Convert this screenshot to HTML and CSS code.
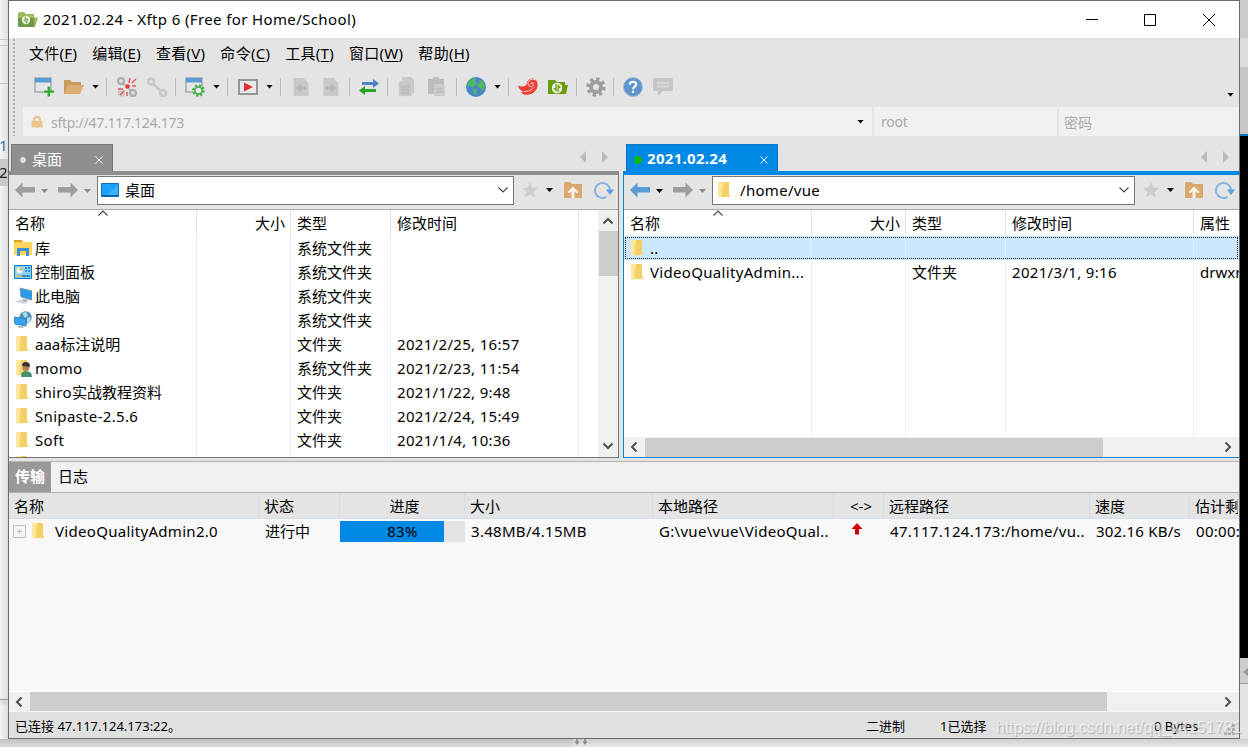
FILE: index.html
```
<!DOCTYPE html>
<html lang="zh-CN">
<head>
    <meta charset="UTF-8">
    <meta name="viewport" content="width=device-width, initial-scale=1.0">
    <title>2021.02.24 - Xftp 6 (Free for Home/School)</title>
    <link rel="stylesheet" href="styles.css">
</head>
<body>
    <!-- Shared icons -->
    <svg class="sprite" aria-hidden="true">
        <symbol id="folder" viewBox="0 0 18 18">
            <path d="M6 1h7v15H6z" fill="#f3cf66"/>
            <path d="M12 13h2v3h-3z" fill="#f6d677"/>
            <path d="M2 1h5l-1 14-1 2-3-1z" fill="#ffe9a2"/>
            <path d="M5 4v13l1.500-1.500V4z" fill="#f8dc85"/>
        </symbol>
        <symbol id="back" viewBox="0 0 20 16">
            <path d="M0 8l7.500-7.500V5H20v5.500H7.500V15.500z"/>
        </symbol>
        <symbol id="star" viewBox="0 0 18 18">
            <path d="M9 1l2.300 5.400 5.700.5-4.300 3.800 1.300 5.800L9 13.400 4 16.500l1.300-5.800L1 6.900l5.700-.5z" fill="#cdcdcd"/>
        </symbol>
        <symbol id="up" viewBox="0 0 18 16">
            <path d="M0 2q0-2 2-2h4l2 2h10v14H0z" fill="#d9a66c"/>
            <path d="M0 4h18v12H0z" fill="#dba86e"/>
            <path d="M9 4.500l5.500 5.500-1.500 1.500-2.500-2V16h-3V9.500L5 11.500 3.500 10z" fill="#fbf3e9"/>
        </symbol>
        <symbol id="refresh" viewBox="0 0 20 18">
            <path d="M12.500 15.800A7.500 7.500 0 1 1 16 9" fill="none" stroke="#86b4e0" stroke-width="2"/>
            <path d="M12 8.500h8L16 14z" fill="#5e9fdc"/>
        </symbol>
        <symbol id="chev" viewBox="0 0 12 12">
            <path d="M1.500 3.500L6 8l4.500-4.500" fill="none" stroke="#444" stroke-width="1.100"/>
        </symbol>
        <symbol id="thick" viewBox="0 0 12 12">
            <path d="M8.500 1.500L4 6l4.500 4.500" fill="none" stroke="#505050" stroke-width="2"/>
        </symbol>
    </svg>

    <div class="side side-left">
        <div class="ln l1"></div>
        <div class="ln l2"></div>
        <div class="ln l3"></div>
        <div class="num blue">1</div>
        <div class="num sel">2</div>
        <div class="ln l4"></div>
    </div>

    <div class="window">
        <!-- Title bar -->
        <div class="titlebar">
            <svg width="20" height="16" viewBox="0 0 20 16">
                <path d="M0 2q0-2 2-2h4l2 2h8v3l4 1-3 9H0z" fill="#9dbb5c"/>
                <path d="M0 6h16v9H0z" fill="#6f9a45"/>
                <circle cx="8" cy="8" r="4.200" fill="#eef4e2"/>
                <path d="M7.200 4.500v5L5.700 8M8.800 11.500v-5l1.500 1.500" fill="none" stroke="#6f9a45"/>
            </svg>
            <span class="title">2021.02.24 - Xftp 6 (Free for Home/School)</span>
            <svg class="winbtns" width="140" height="16" viewBox="0 0 140 16">
                <path d="M0 7.500h12M58.500 2.500h11v11h-11zM117 2l12 12M129 2l-12 12" fill="none" stroke="#000"/>
            </svg>
        </div>

        <div class="bars">
            <div class="grip"></div>
            <div class="bars-main">
                <!-- Menu -->
                <div class="menu">
                    <span>文件(<u>F</u>)</span>
                    <span>编辑(<u>E</u>)</span>
                    <span>查看(<u>V</u>)</span>
                    <span>命令(<u>C</u>)</span>
                    <span>工具(<u>T</u>)</span>
                    <span>窗口(<u>W</u>)</span>
                    <span>帮助(<u>H</u>)</span>
                </div>

                <!-- Toolbar -->
                <div class="toolbar">
                    <svg class="tool" viewBox="0 0 20 20">
                        <path d="M1 1h16v14H1z" fill="#e4e6e7" stroke="#a3a8ab" stroke-width="1.500"/>
                        <path d="M1 1h16v4.500H1z" fill="#5b9bd5"/>
                        <path d="M14.800 9.500v10M10 14.600h10" stroke="#31ae31" stroke-width="2.400"/>
                    </svg>
                    <svg class="tool" viewBox="0 0 20 20">
                        <path d="M0 17V3h6l2 2h9v4" fill="#c99a60"/>
                        <path d="M0 17L4 8h16l-4 9z" fill="#dcae75"/>
                    </svg>
                    <i class="caret"></i>
                    <i class="sep wide"></i>
                    <svg class="tool" viewBox="0 0 20 20">
                        <g fill="none" stroke="#afafaf" stroke-width="2.400">
                            <circle cx="4" cy="4" r="3"/><circle cx="16" cy="16" r="3"/>
                            <circle cx="4.500" cy="16" r="2.500" stroke="#cacaca"/><path d="M6 6l2 2M12 12l2 2"/>
                        </g>
                        <path d="M12 6l1-5M15 6l4-4M15 9h4M6 12H1M7 14l-4 4M10 15v4" stroke="#e5555a" stroke-width="1.500"/>
                        <circle cx="10.500" cy="9.500" r="2.300" fill="#e0383e"/>
                    </svg>
                    <svg class="tool" viewBox="0 0 20 20">
                        <g fill="none" stroke="#c8c8c8" stroke-width="2.600">
                            <circle cx="4" cy="4.500" r="3"/><circle cx="16" cy="16" r="3"/><path d="M6 7l8 7"/>
                        </g>
                    </svg>
                    <i class="sep"></i>
                    <svg class="tool" viewBox="0 0 20 20">
                        <path d="M1 1h16v14H1z" fill="#e4e6e7" stroke="#a3a8ab" stroke-width="1.500"/>
                        <path d="M1 1h16v4.500H1z" fill="#5b9bd5"/>
                        <circle cx="13.500" cy="13.500" r="5" fill="#e4e6e7" stroke="#43ae43" stroke-width="2.600" stroke-dasharray="2 1.900"/>
                        <circle cx="13.500" cy="13.500" r="3.600" fill="#eee" stroke="#43ae43" stroke-width="1.600"/>
                    </svg>
                    <i class="caret"></i>
                    <i class="sep wide"></i>
                    <svg class="tool" viewBox="0 0 20 20">
                        <rect x="1" y="3" width="18" height="14" fill="#e6e8ea" stroke="#92979b" stroke-width="2"/>
                        <path d="M6 5.500l9 4.500-9 4.500z" fill="#e32f33"/>
                    </svg>
                    <i class="caret"></i>
                    <i class="sep wide"></i>
                    <svg class="tool" viewBox="0 0 20 20">
                        <path d="M2.500 1h10l5 5v13h-15z" fill="#c9c9c9"/>
                        <path d="M5 11l5-4.500v3h5v3h-5v3z" fill="#b7b7b7"/>
                    </svg>
                    <svg class="tool" viewBox="0 0 20 20">
                        <path d="M2.500 1h10l5 5v13h-15z" fill="#c9c9c9"/>
                        <path d="M15 11l-5-4.500v3H5v3h5v3z" fill="#b7b7b7"/>
                    </svg>
                    <i class="sep"></i>
                    <svg class="tool" viewBox="0 0 20 20">
                        <path d="M3 5h11V2l6 4.500-6 4.500V8H3z" fill="#4a86c8"/>
                        <path d="M17 12H6V9L0 13.500 6 18v-3h11z" fill="#27a527"/>
                    </svg>
                    <i class="sep"></i>
                    <svg class="tool" viewBox="0 0 20 20">
                        <path d="M5 0h9l3 3v13H5z" fill="#c9c9c9"/>
                        <path d="M2 4h10l3 3v12H2z" fill="#c6c6c6" stroke="#d3d3d3" stroke-width=".6"/>
                        <path d="M4 10h8M4 13h8M4 16h8" stroke="#b5b5b5"/>
                    </svg>
                    <svg class="tool" viewBox="0 0 20 20">
                        <path d="M1 2h4l2-2h4l2 2h4v15H1z" fill="#bdbdbd"/>
                        <path d="M7 7h8l3 3v9H7z" fill="#cbcbcb"/>
                        <path d="M9 12h6M9 15h7" stroke="#b8b8b8"/>
                    </svg>
                    <i class="sep gap"></i>
                    <svg class="tool" viewBox="0 0 20 20">
                        <circle cx="10" cy="10" r="10" fill="#4a86c8"/>
                        <path d="M1 6l4-4 5-1-1 4 2 2-4 3-5-1zM7 11l4 2-1 5-2-1z" fill="#4db95f"/>
                        <path d="M13 3l4 1 2 6-3 4-2-3-2-1-1-3 3-1z" fill="#4db95f"/>
                    </svg>
                    <i class="caret"></i>
                    <i class="sep wide near"></i>
                    <svg class="tool" viewBox="0 0 20 20">
                        <path d="M0 8.500q5 2 8.500-.5c0-4.500 3.500-7 7-6.500 5 1.500 5 8 2.500 11.500-4 6-12 6-15 2.500l2.500-.8Q1 13 0 8.500z" fill="#ee4136"/>
                        <path d="M18.500 3.500c-3-2.500-9-1-8.500 3.500.5 3.500 5.500 3 5.500.3 0-1.800-2.500-2-2.800-.3M6 14.500c4 0 8-1 10-4.500" fill="none" stroke="#f8d6d2"/>
                    </svg>
                    <svg class="tool" viewBox="0 0 20 20">
                        <path d="M0 17V3h7l2 2h8v3h3l-2 9z" fill="#6a9b0c"/>
                        <circle cx="9" cy="11" r="5.200" fill="#fff"/>
                        <path d="M8 7v6.500L5.800 11M10.200 15V8.500l2.200 2.500" fill="none" stroke="#6a9b0c" stroke-width="1.400"/>
                    </svg>
                    <i class="sep"></i>
                    <svg class="tool" viewBox="0 0 20 20">
                        <circle cx="10" cy="10" r="8" fill="none" stroke="#979b9e" stroke-width="3.400" stroke-dasharray="3.200 3.080"/>
                        <circle cx="10" cy="10" r="5" fill="none" stroke="#9b9ea1" stroke-width="4"/>
                    </svg>
                    <i class="sep tight"></i>
                    <svg class="tool" viewBox="0 0 20 20">
                        <circle cx="10" cy="10" r="9.500" fill="#5f94cd" stroke="#a3bddb"/>
                        <path d="M6.800 7.800c0-4.200 6.600-4 6.400-.3 0 2-3.200 2.300-3.200 4.700M10 13.500v2.500" fill="none" stroke="#fff" stroke-width="2.100"/>
                    </svg>
                    <svg class="tool" viewBox="0 0 20 20">
                        <path d="M2 1h16q2 0 2 2v9q0 2-2 2h-8l-5 5v-5H2q-2 0-2-2V3q0-2 2-2z" fill="#c6c6c6"/>
                        <path d="M4 6h12M4 9.500h12" stroke="#d6d6d6" stroke-width="2"/>
                    </svg>
                    <i class="caret last"></i>
                </div>

                <!-- Address bar -->
                <div class="address">
                    <div class="field host">
                        <svg width="12" height="12" viewBox="0 0 12 12">
                            <path d="M3 6V3.500q0-2.500 3-2.500t3 2.500V6" fill="none" stroke="#e6bd84" stroke-width="1.800"/>
                            <path d="M.5 5h11v6.500H.5z" fill="#ecc48c"/>
                        </svg>
                        <span>sftp://47.117.124.173</span>
                        <i class="caret"></i>
                    </div>
                    <div class="field user">root</div>
                    <div class="field pass">密码</div>
                </div>
            </div>
        </div>

        <!-- File panes -->
        <div class="panes">
            <div class="pane local">
                <div class="tabs">
                    <div class="tab"><i class="dot"></i><span>桌面</span><svg width="8" height="8" viewBox="0 0 8 8"><path d="M.5.5l7 7M7.500.5l-7 7" stroke="#fff"/></svg></div>
                    <svg class="tabnav" width="28" height="12" viewBox="0 0 28 12"><path d="M6 0v12L0 6zM22 0v12l6-6z" fill="#bababa"/></svg>
                </div>
                <div class="pane-box">
                    <div class="navbar">
                        <svg class="arrow" width="20" height="16"><use href="#back"/></svg>
                        <i class="caret grey"></i>
                        <svg class="arrow flip" width="20" height="16"><use href="#back"/></svg>
                        <i class="caret grey"></i>
                        <div class="combo">
                            <svg width="18" height="14" viewBox="0 0 18 14">
                                <path d="M.5.5h17v13H.5z" fill="#1aa1fb" stroke="#0b6cb8"/>
                                <path d="M5 13L17 2v11z" fill="#3db0ff"/><path d="M1 12.500h16" stroke="#0b5e9f"/>
                            </svg>
                            <span>桌面</span>
                            <svg class="end" width="12" height="12"><use href="#chev"/></svg>
                        </div>
                        <svg class="fav" width="18" height="18"><use href="#star"/></svg>
                        <i class="caret"></i>
                        <svg class="up" width="18" height="16"><use href="#up"/></svg>
                        <svg width="20" height="18"><use href="#refresh"/></svg>
                    </div>
                    <div class="list-wrap">
                        <div class="list">
                            <div class="row head">
                                <div class="c-name">名称<svg class="sort" width="12" height="12"><use href="#chev"/></svg></div><div class="c-size">大小</div><div class="c-type">类型</div><div class="c-date">修改时间</div><div class="c-attr"></div>
                            </div>
                            <div class="row">
                                <div class="c-name"><svg width="18" height="18" viewBox="0 0 18 18"><path d="M0 1h8l1 2H0z" fill="#dfa21a"/><path d="M0 3h18v13H0z" fill="#ffd35c"/><path d="M3 17V9h12v8h-3v-5H6v5z" fill="#3c8fd9"/></svg>库</div><div class="c-size"></div><div class="c-type">系统文件夹</div><div class="c-date"></div><div class="c-attr"></div>
                            </div>
                            <div class="row">
                                <div class="c-name"><svg width="18" height="18" viewBox="0 0 18 18"><path d="M.5 2.500h17v13H.5z" fill="#8ad4fa" stroke="#1478b8"/><circle cx="5.500" cy="7.500" r="3" fill="#fff"/><path d="M5.500 7.500V4.500a3 3 0 0 1 3 3z" fill="#f7a823"/><path d="M11 5h2M14 5h2M11 8h2M14 8h2M8 13h8" stroke="#1a78b9" stroke-width="1.500"/><path d="M3 13h5" stroke="#f7a823" stroke-width="1.500"/></svg>控制面板</div><div class="c-size"></div><div class="c-type">系统文件夹</div><div class="c-date"></div><div class="c-attr"></div>
                            </div>
                            <div class="row">
                                <div class="c-name"><svg width="18" height="18" viewBox="0 0 18 18"><path d="M6 1l12 3v9L7 10z" fill="#2b9ceb" stroke="#6b8aa0" stroke-width=".8"/><path d="M9 12l5 1-2 2-4-1z" fill="#9aa7b0"/><path d="M0 14l8-1 6 2-4 2z" fill="#c9cfd4"/></svg>此电脑</div><div class="c-size"></div><div class="c-type">系统文件夹</div><div class="c-date"></div><div class="c-attr"></div>
                            </div>
                            <div class="row">
                                <div class="c-name"><svg width="18" height="18" viewBox="0 0 18 18"><circle cx="11.500" cy="6.500" r="6.300" fill="#4f93bd"/><path d="M8 2l4-1 2 3-3 3zM13 7l4-1-1 5-3 1z" fill="#b5dbe8"/><path d="M0 6l12 2v7L1 13z" fill="#36a5f2" stroke="#1b75bb" stroke-width=".8"/><path d="M4 15h5l1 2H4z" fill="#b8c4cc"/></svg>网络</div><div class="c-size"></div><div class="c-type">系统文件夹</div><div class="c-date"></div><div class="c-attr"></div>
                            </div>
                            <div class="row">
                                <div class="c-name"><svg width="18" height="18"><use href="#folder"/></svg>aaa标注说明</div><div class="c-size"></div><div class="c-type">文件夹</div><div class="c-date"><b>2021/2/25, 16:57</b></div><div class="c-attr"></div>
                            </div>
                            <div class="row">
                                <div class="c-name"><svg width="18" height="18" viewBox="0 0 18 18"><use href="#folder"/><path d="M7 18q0-6 5-6 6 0 6 6z" fill="#43906f"/><circle cx="12" cy="8.500" r="3.500" fill="#b98058"/><path d="M8 7q0-4 4-4t4 4l-1 1-6-1z" fill="#3a3533"/></svg><b>momo</b></div><div class="c-size"></div><div class="c-type">系统文件夹</div><div class="c-date"><b>2021/2/23, 11:54</b></div><div class="c-attr"></div>
                            </div>
                            <div class="row">
                                <div class="c-name"><svg width="18" height="18"><use href="#folder"/></svg><span><b>shiro</b>实战教程资料</span></div><div class="c-size"></div><div class="c-type">文件夹</div><div class="c-date"><b>2021/1/22, 9:48</b></div><div class="c-attr"></div>
                            </div>
                            <div class="row">
                                <div class="c-name"><svg width="18" height="18"><use href="#folder"/></svg><b>Snipaste-2.5.6</b></div><div class="c-size"></div><div class="c-type">文件夹</div><div class="c-date"><b>2021/2/24, 15:49</b></div><div class="c-attr"></div>
                            </div>
                            <div class="row">
                                <div class="c-name"><svg width="18" height="18"><use href="#folder"/></svg><b>Soft</b></div><div class="c-size"></div><div class="c-type">文件夹</div><div class="c-date"><b>2021/1/4, 10:36</b></div><div class="c-attr"></div>
                            </div>
                            <div class="row fill">
                                <div class="c-name"><svg width="18" height="18"><use href="#folder"/></svg></div><div class="c-size"></div><div class="c-type"></div><div class="c-date"></div><div class="c-attr"></div>
                            </div>
                        </div>
                        <div class="vscroll">
                            <svg class="rot" width="12" height="12"><use href="#thick"/></svg>
                            <div class="thumb"></div>
                            <svg class="rot down" width="12" height="12"><use href="#thick"/></svg>
                        </div>
                    </div>
                </div>
            </div>

            <div class="pane remote">
                <div class="tabs">
                    <div class="tab"><i class="dot"></i><span>2021.02.24</span><svg width="8" height="8" viewBox="0 0 8 8"><path d="M.5.5l7 7M7.500.5l-7 7" stroke="#fff"/></svg></div>
                    <svg class="tabnav" width="28" height="12" viewBox="0 0 28 12"><path d="M6 0v12L0 6zM22 0v12l6-6z" fill="#bababa"/></svg>
                </div>
                <div class="pane-box">
                    <div class="navbar">
                        <svg class="arrow on" width="20" height="16"><use href="#back"/></svg>
                        <i class="caret"></i>
                        <svg class="arrow flip" width="20" height="16"><use href="#back"/></svg>
                        <i class="caret grey"></i>
                        <div class="combo">
                            <svg width="18" height="18"><use href="#folder"/></svg>
                            <span class="path">/home/vue</span>
                            <svg class="end" width="12" height="12"><use href="#chev"/></svg>
                        </div>
                        <svg class="fav" width="18" height="18"><use href="#star"/></svg>
                        <i class="caret"></i>
                        <svg class="up" width="18" height="16"><use href="#up"/></svg>
                        <svg width="20" height="18"><use href="#refresh"/></svg>
                    </div>
                    <div class="list-wrap">
                        <div class="list">
                            <div class="row head">
                                <div class="c-name">名称<svg class="sort" width="12" height="12"><use href="#chev"/></svg></div><div class="c-size">大小</div><div class="c-type">类型</div><div class="c-date">修改时间</div><div class="c-attr">属性</div>
                            </div>
                            <div class="row selected">
                                <div class="c-name"><svg width="18" height="18"><use href="#folder"/></svg><b>..</b></div><div class="c-size"></div><div class="c-type"></div><div class="c-date"></div><div class="c-attr"></div>
                            </div>
                            <div class="row">
                                <div class="c-name"><svg width="18" height="18"><use href="#folder"/></svg><b>VideoQualityAdmin...</b></div><div class="c-size"></div><div class="c-type">文件夹</div><div class="c-date"><b>2021/3/1, 9:16</b></div><div class="c-attr">drwxr</div>
                            </div>
                            <div class="row fill">
                                <div class="c-name"></div><div class="c-size"></div><div class="c-type"></div><div class="c-date"></div><div class="c-attr"></div>
                            </div>
                        </div>
                    </div>
                    <div class="hscroll">
                        <svg width="12" height="12"><use href="#thick"/></svg>
                        <div class="thumb"></div>
                        <svg class="flip" width="12" height="12"><use href="#thick"/></svg>
                    </div>
                </div>
            </div>
        </div>

        <!-- Transfers -->
        <div class="bottom-tabs">
            <div class="btab active">传输</div>
            <div class="btab">日志</div>
        </div>
        <div class="transfer head">
            <div class="t-name">名称</div><div class="t-state">状态</div><div class="t-prog">进度</div><div class="t-size">大小</div><div class="t-local">本地路径</div><div class="t-dir">&lt;-&gt;</div><div class="t-remote">远程路径</div><div class="t-speed">速度</div><div class="t-eta">估计剩余时间</div>
        </div>
        <div class="transfer item">
            <div class="t-name">
                <svg width="13" height="13" viewBox="0 0 13 13"><path d="M.5.5h12v12H.5zM4 6.500h5M6.500 4v5" fill="none" stroke="#bdbdbd"/></svg>
                <svg class="tfolder" width="18" height="18"><use href="#folder"/></svg>
                <span>VideoQualityAdmin2.0</span>
            </div>
            <div class="t-state">进行中</div>
            <div class="t-prog"><div class="progress"><div class="bar" style="width: 83%"></div><span>83%</span></div></div>
            <div class="t-size">3.48MB/4.15MB</div>
            <div class="t-local">G:\vue\vue\VideoQual..</div>
            <div class="t-dir"><svg width="12" height="12" viewBox="0 0 12 12"><path d="M6 0l5.500 6H8v5.500H4V6H.5z" fill="#d00000"/></svg></div>
            <div class="t-remote">47.117.124.173:/home/vu..</div>
            <div class="t-speed">302.16 KB/s</div>
            <div class="t-eta">00:00:02</div>
        </div>
        <div class="empty"></div>
        <div class="hscroll wide">
            <svg width="12" height="12"><use href="#thick"/></svg>
            <div class="thumb"></div>
            <svg class="flip" width="12" height="12"><use href="#thick"/></svg>
        </div>

        <!-- Status bar -->
        <div class="status">
            <span class="s-conn">已连接 47.117.124.173:22。</span>
            <span class="s-mode">二进制</span>
            <span class="s-sel">1已选择</span>
            <span class="s-bytes">0 Bytes</span>
            <svg class="size-grip" width="12" height="12" viewBox="0 0 12 12"><path d="M8 0h3v3H8zM4 4h3v3H4zM8 4h3v3H8zM0 8h3v3H0zM4 8h3v3H4zM8 8h3v3H8z" fill="#b4b4b4"/></svg>
        </div>
    </div>

    <div class="side side-right">
        <div class="r1"></div>
        <div class="r2"></div>
        <div class="r3"></div>
        <div class="r4"></div>
        <div class="r5"></div>
        <div class="r6"><svg width="6" height="10" viewBox="0 0 6 10"><path d="M0 5l6-5v10z" fill="#9a9a9a"/></svg></div>
    </div>

    <div class="below">
        <div class="below-left"></div>
        <svg width="20" height="7" viewBox="0 0 20 7"><path d="M4 0v5M12 0v5" stroke="#8a8a8a" stroke-width="1.500"/><path d="M1.500 2.500h5L4 6zM9.500 2.500h5L12 6z" fill="#8a8a8a"/></svg>
    </div>

    <div class="watermark">https://blog.csdn.net/qq_44151781</div>
</body>
</html>
```
FILE: styles.css
```
* {
    margin: 0;
    padding: 0;
    box-sizing: border-box;
}

body {
    width: 1248px;
    height: 747px;
    overflow: hidden;
    display: grid;
    grid-template-columns: 8px 1232px 8px;
    grid-template-rows: 739px 8px;
    background: #e8e8e8;
    color: #000;
    font-family: "Noto Sans", "Noto Sans CJK SC", sans-serif;
    font-size: 15px;
    line-height: 24px;
    white-space: nowrap;
}

svg {
    display: block;
    flex: none;
}

.sprite {
    position: absolute;
    width: 0;
    height: 0;
}

.flip {
    transform: scaleX(-1);
}

/* What shows behind the window */
.side {
    display: flex;
    flex-direction: column;
    overflow: hidden;
}

.side-left {
    background: linear-gradient(90deg, #f4f4f4, #dedede);
}

.ln {
    flex: none;
    height: 1px;
    background: #c8c8c8;
}

.l1 { margin-top: 39px; }
.l2 { margin-top: 5px; }
.l3 { margin-top: 37px; }

.num {
    height: 27px;
    line-height: 27px;
    margin-left: -1px;
    color: #222;
}

.num.blue {
    margin-top: 48px;
    color: #2b7cab;
}

.num.sel {
    background: #c9c9c9;
}

.l4 {
    margin-top: 513px;
    background: #999;
    box-shadow: 0 2px 4px #888;
}

.side-right { background: #e4e4e4; }
.r1 { height: 38px; background: #cbcbcb; }
.r2 { height: 29px; background: #dcdcdc; }
.r3 { height: 67px; background: #c6c6c6; }
.r4 { height: 2px; background: #0a78c4; }
.r5 { height: 522px; background: #000; }
.r6 { height: 26px; padding: 9px 0 0 3px; background: #cdcdcd; border-bottom: 1px solid #999; }

.below {
    grid-column: 1 / 4;
    display: flex;
    background: linear-gradient(#cfcfcf, #e6e6e6);
}

.below-left {
    width: 573px;
    background: linear-gradient(#c0c0c0, #dcdcdc);
}

/* Window */
.window {
    display: flex;
    flex-direction: column;
    background: #e4e4e4;
    border: 1px solid #6b6b6b;
    overflow: hidden;
}

.titlebar {
    height: 37px;
    flex: none;
    display: flex;
    align-items: center;
    padding-left: 9px;
    background: #fff;
}

.title {
    margin: -2px 0 0 5px;
    letter-spacing: 0.38px;
}

.winbtns {
    margin-left: auto;
    margin-right: 13px;
}

.bars {
    display: flex;
    height: 98px;
    flex: none;
}

.grip {
    width: 2px;
    margin: 1px 8px 0 4px;
    background: repeating-linear-gradient(#a8a8a8 0 2px, #e4e4e4 2px 4px);
}

.bars-main {
    flex: 1;
    display: flex;
    flex-direction: column;
}

.menu {
    display: flex;
    height: 30px;
    padding-left: 6px;
    gap: 15px;
    align-items: center;
    letter-spacing: 0.28px;
}

.menu u {
    text-underline-offset: 2px;
}

.toolbar {
    display: flex;
    align-items: center;
    height: 39px;
    padding: 0 0 2px 6px;
}

.tool {
    width: 20px;
    height: 20px;
    margin: 0 5px;
}

.caret {
    flex: none;
    width: 7px;
    height: 4px;
    margin: 0 2px 0 1px;
    background: #000;
    clip-path: polygon(0 0, 100% 0, 50% 100%);
}

.toolbar .caret {
    margin: 0 0 0 3px;
}

.caret.grey {
    background: #8a8a8a;
}

.toolbar .caret.last {
    margin: 16px 5px 0 auto;
}

.sep {
    flex: none;
    width: 1px;
    height: 18px;
    margin: 0 4px 0 3px;
    background: #bdbdbd;
}

.sep.wide { margin: 0 5px 0 7px; }
.sep.gap { margin: 0 4px; }
.sep.near { margin-right: 4px; }
.sep.tight { margin: 0 4px 0 2px; }

.address {
    display: flex;
    gap: 2px;
    height: 29px;
    color: #ababab;
    font-size: 14px;
}

.field {
    display: flex;
    align-items: center;
    background: #f0f0f0;
}

.host {
    width: 849px;
    padding: 0 6px 0 8px;
}

.host span {
    margin: 2px 0 0 8px;
    letter-spacing: -0.27px;
}

.user {
    width: 183px;
    padding-left: 7px;
    letter-spacing: -0.2px;
}

.host .caret {
    margin-left: auto;
}

.pass {
    flex: 1;
    padding: 2px 0 0 5px;
}

/* File panes */
.panes {
    display: flex;
    justify-content: space-between;
    height: 322px;
    flex: none;
}

.pane {
    display: flex;
    flex-direction: column;
    width: 610px;
}

.remote {
    width: 616px;
}

.tabs {
    display: flex;
    align-items: flex-end;
    justify-content: space-between;
    height: 35px;
    padding: 0 11px 0 2px;
}

.remote .tabs {
    padding: 0 10px 0 3px;
}

.tab {
    display: flex;
    align-items: center;
    width: 102px;
    height: 27px;
    padding: 1px 9px 0 8px;
    background: #8f8f8f;
    border: 1px solid #777;
    border-bottom: 0;
    color: #fff;
}

.tab svg {
    margin: 3px 0 0 auto;
}

.dot {
    width: 6px;
    height: 6px;
    margin: 3px 6px 0 0;
    border-radius: 50%;
    background: #dcdcdc;
}

.remote .tab {
    width: 152px;
    padding-top: 0;
    background: #0089e4;
    border-color: #0076c4;
    font-weight: bold;
    letter-spacing: 0.3px;
}

.remote .dot {
    width: 8px;
    height: 8px;
    margin-left: -1px;
    margin-right: 5px;
    background: #0db50d;
}

.tabnav {
    margin-bottom: 8px;
}

.pane-box {
    flex: 1;
    display: flex;
    flex-direction: column;
    min-height: 0;
    border-top: 4px solid #8f8f8f;
    border-right: 1px solid #777;
    border-bottom: 1px solid #777;
}

.remote .pane-box {
    border-top-color: #0089e4;
    border-left: 1px solid #0b84d2;
    border-right: 0;
    border-bottom-color: #0b84d2;
}

.navbar {
    display: flex;
    align-items: center;
    height: 35px;
    flex: none;
    padding: 0 4px 4px 5px;
    border-bottom: 1px solid #ababab;
}

.arrow {
    fill: #9d9d9d;
    margin: 0 5px 0 1px;
}

.arrow.on { fill: #5b9bd5; }

.arrow + .caret {
    margin-right: 9px;
    margin-top: 2px;
}

.arrow.flip + .caret {
    margin-right: 6px;
}

.combo {
    flex: 1;
    display: flex;
    align-items: center;
    height: 29px;
    padding: 0 4px 0 3px;
    background: #fff;
    border: 1px solid #767676;
}

.combo span {
    margin-left: 6px;
}

.combo .path {
    margin-left: 6px;
    letter-spacing: 0.3px;
}

.end {
    margin-left: auto;
}

.fav { margin: 0 6px 0 7px; }
.up { margin: 0 12px 0 9px; }

.list-wrap {
    display: flex;
    flex: 1;
    min-height: 0;
    background: #fff;
}

.list {
    flex: 1;
    display: flex;
    flex-direction: column;
    overflow: hidden;
}

.row {
    display: flex;
    height: 24px;
    flex: none;
}

.row > div {
    display: flex;
    align-items: center;
    flex: none;
    padding-left: 6px;
    border-right: 1px solid #e8f1fb;
}

.row.head {
    height: 26px;
}

.row.head > div {
    border-color: #e2e2e2;
}

.row .c-name {
    width: 188px;
    padding-left: 5px;
}

.row.head .c-name {
    padding-left: 6px;
    position: relative;
}

.c-name svg {
    margin-right: 3px;
}

.row .sort {
    position: absolute;
    left: 88px;
    top: -3px;
    transform: scaleY(-1);
}

.row .c-size {
    width: 94px;
    justify-content: flex-end;
    padding-right: 5px;
}

.row .c-type { width: 100px; }
.row .c-date { width: 188px; }

.row .c-attr {
    flex: 1;
    border: 0;
    overflow: hidden;
}

/* latin names and dates run a little wider */
.row b {
    font-weight: normal;
    letter-spacing: 0.32px;
}

.row.fill {
    flex: 1 0 0;
    overflow: hidden;
}

.row.fill > div {
    align-items: flex-start;
    padding-top: 3px;
}

.row.selected {
    background: #cce8ff;
    outline: 1px dotted #222;
    outline-offset: -2px;
}

.vscroll {
    display: flex;
    flex-direction: column;
    align-items: center;
    width: 20px;
    padding: 5px 0;
    background: #f0f0f0;
}

.vscroll .thumb {
    width: 19px;
    height: 45px;
    margin-top: 4px;
    background: #cdcdcd;
}

.rot {
    transform: rotate(90deg);
}

.rot.down {
    margin-top: auto;
    transform: rotate(-90deg);
}

.hscroll {
    display: flex;
    align-items: center;
    height: 20px;
    flex: none;
    padding: 0 5px 0 4px;
    background: #f0f0f0;
}

.hscroll .thumb {
    width: 458px;
    height: 19px;
    margin: 0 auto 0 5px;
    background: #cdcdcd;
}

.hscroll.wide {
    height: 21px;
    border-top: 1px solid #fff;
    border-bottom: 1px solid #f4f4f4;
}

.hscroll.wide .thumb {
    width: 1077px;
}

/* Transfer panel */
.bottom-tabs {
    display: flex;
    height: 32px;
    flex: none;
    margin-top: 3px;
    background: #f0f0f0;
    border-top: 1px solid #b4b4b4;
    border-bottom: 1px solid #b4b4b4;
}

.btab {
    padding: 2px 6px 0;
}

.btab.active {
    width: 42px;
    background: #999;
    color: #fff;
    font-weight: bold;
}

.btab + .btab {
    padding-left: 7px;
}

.transfer {
    display: flex;
    height: 25px;
    flex: none;
    background: #f8f8f8;
}

.transfer.item {
    letter-spacing: 0.3px;
}

.transfer.head {
    height: 26px;
    background: #e4e4e4;
    border-bottom: 1px solid #d3dcea;
}

.transfer > div {
    display: flex;
    align-items: center;
    flex: none;
    padding-left: 6px;
    padding-bottom: 1px;
    overflow: hidden;
}

.transfer.head > div {
    padding-left: 5px;
    padding-top: 1px;
    border-right: 1px solid #d3dcea;
}

.transfer .t-name { width: 250px; padding-left: 4px; }
.transfer.head .t-name { padding-left: 5px; }
.transfer .t-state { width: 81px; }
.transfer.item .t-state { letter-spacing: 0; }
.transfer .t-prog { width: 125px; padding-left: 0; justify-content: center; }
.transfer.item .t-prog { padding-bottom: 0; }
.transfer .t-size { width: 188px; }
.transfer .t-local { width: 181px; }
.transfer .t-dir { width: 50px; padding-left: 0; justify-content: center; }
.transfer .t-remote { width: 206px; }
.transfer .t-speed { width: 100px; }
.transfer.item .t-speed { letter-spacing: 0.2px; }
.transfer .t-eta { flex: 1; }

.t-dir svg {
    margin: 0 5px 4px 0;
}

.tfolder {
    margin: 0 7px 0 4px;
}

.progress {
    display: grid;
    width: 125px;
    height: 21px;
    line-height: 20px;
    background: #e4e4e4;
    text-align: center;
}

.progress > * {
    grid-area: 1 / 1;
}

.bar {
    background: #0089e4;
}

.empty {
    flex: 1;
    background: #f8f8f8;
}

/* Status bar */
.status {
    display: flex;
    align-items: center;
    height: 26px;
    flex: none;
    padding: 2px 3px 0 6px;
    background: #e0e0e0;
    font-size: 13px;
}

.s-conn { width: 851px; }
.s-mode { width: 74px; }
.s-sel { width: 214px; }

.size-grip {
    margin: 8px 0 0 auto;
}

.watermark {
    position: absolute;
    left: 996px;
    top: 716px;
    font-family: "Liberation Sans", sans-serif;
    font-size: 16px;
    color: rgba(255, 255, 255, 0.6);
    text-shadow: 1px 1px 1px rgba(120, 120, 120, 0.45);
}
```
